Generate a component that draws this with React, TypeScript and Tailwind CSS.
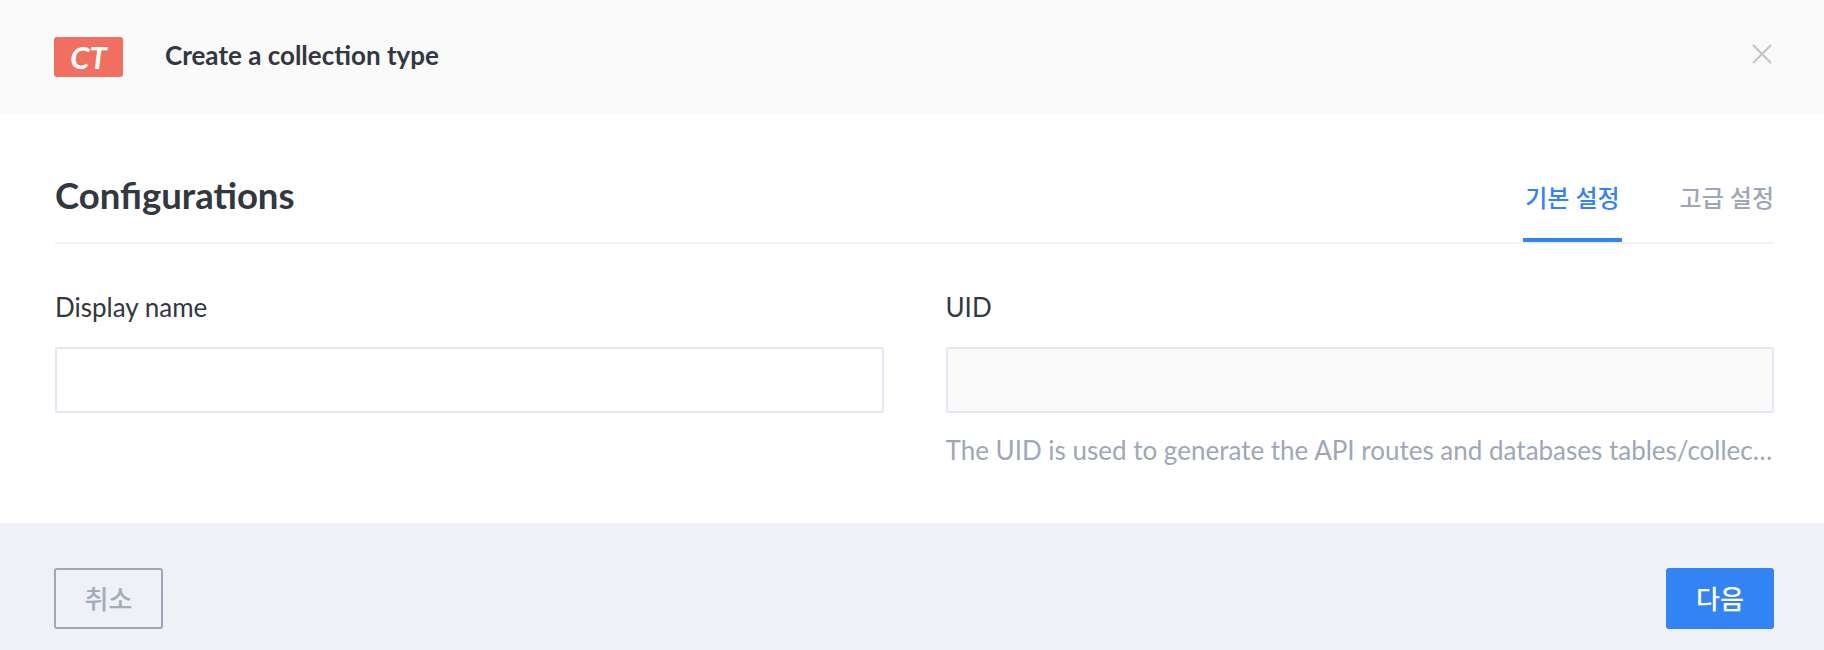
export default function App() {
  return (
    <div className="w-[1824px] h-[650px] bg-white font-['Lato','Noto_Sans_CJK_KR',sans-serif] text-[#333740] overflow-hidden">
      {/* Header */}
      <div className="h-[114px] bg-[#fafafb] flex items-center pl-[54px] pr-[52px]">
        <div className="w-[69px] h-[40px] rounded-[3px] bg-[#f06f60] flex items-center justify-center">
          <span className="text-white text-[31px] font-bold italic leading-none">CT</span>
        </div>
        <h1 className="ml-[42px] mb-[4px] text-[26px] font-bold leading-none text-[#333740]">Create a collection type</h1>
        <button className="ml-auto mb-[6px] w-[20px] h-[20px]">
          <svg width="20" height="20" viewBox="0 0 20 20" fill="none">
            <path d="M1 1L19 19M19 1L1 19" stroke="#c4c5c8" strokeWidth="2.2" />
          </svg>
        </button>
      </div>

      {/* Body */}
      <div className="pl-[55px] pr-[50px] pb-[56px]">
        <div className="h-[130px] flex items-end justify-between border-b-2 border-[#eff1f6]">
          <h2 className="text-[36.5px] font-bold leading-none mb-[29px]">Configurations</h2>
          <div className="flex items-end">
            <div className="px-[2px] pb-[28px] border-b-4 border-[#3383f5] text-[#3383f5] text-[24px] leading-none font-medium">
              기본 설정
            </div>
            <div className="ml-[58px] pb-[28px] border-b-4 border-transparent text-[#9ea7b8] text-[24px] leading-none font-medium">
              고급 설정
            </div>
          </div>
        </div>

        <div className="pt-[50px] grid grid-cols-2 gap-x-[62px]">
          <div>
            <label className="block text-[26px] leading-none mb-[27px]">Display name</label>
            <input className="block w-full h-[66px] border-2 border-[#e3e9f3] rounded-[3px] bg-white outline-none" />
          </div>
          <div className="min-w-0">
            <label className="block text-[26px] leading-none mb-[27px]">UID</label>
            <input disabled className="block w-full h-[66px] border-2 border-[#e3e9f3] rounded-[3px] bg-[#fafafb] outline-none" />
            <p className="mt-[20px] text-[26px] leading-[34px] text-[#9ea7b8] truncate">
              The UID is used to generate the API routes and databases tables/collections
            </p>
          </div>
        </div>
      </div>

      {/* Footer */}
      <div className="h-[129px] bg-[#eef2f6] pt-[45px] pl-[54px] pr-[50px] flex items-start justify-between">
        <button className="w-[109px] h-[61px] border-2 border-[#9ea7b8] rounded-[3px] text-[#a3abbb] text-[26px] font-medium leading-none">
          취소
        </button>
        <button className="w-[108px] h-[61px] bg-[#3383f5] rounded-[3px] text-white text-[26px] font-medium leading-none">
          다음
        </button>
      </div>
    </div>
  );
}
